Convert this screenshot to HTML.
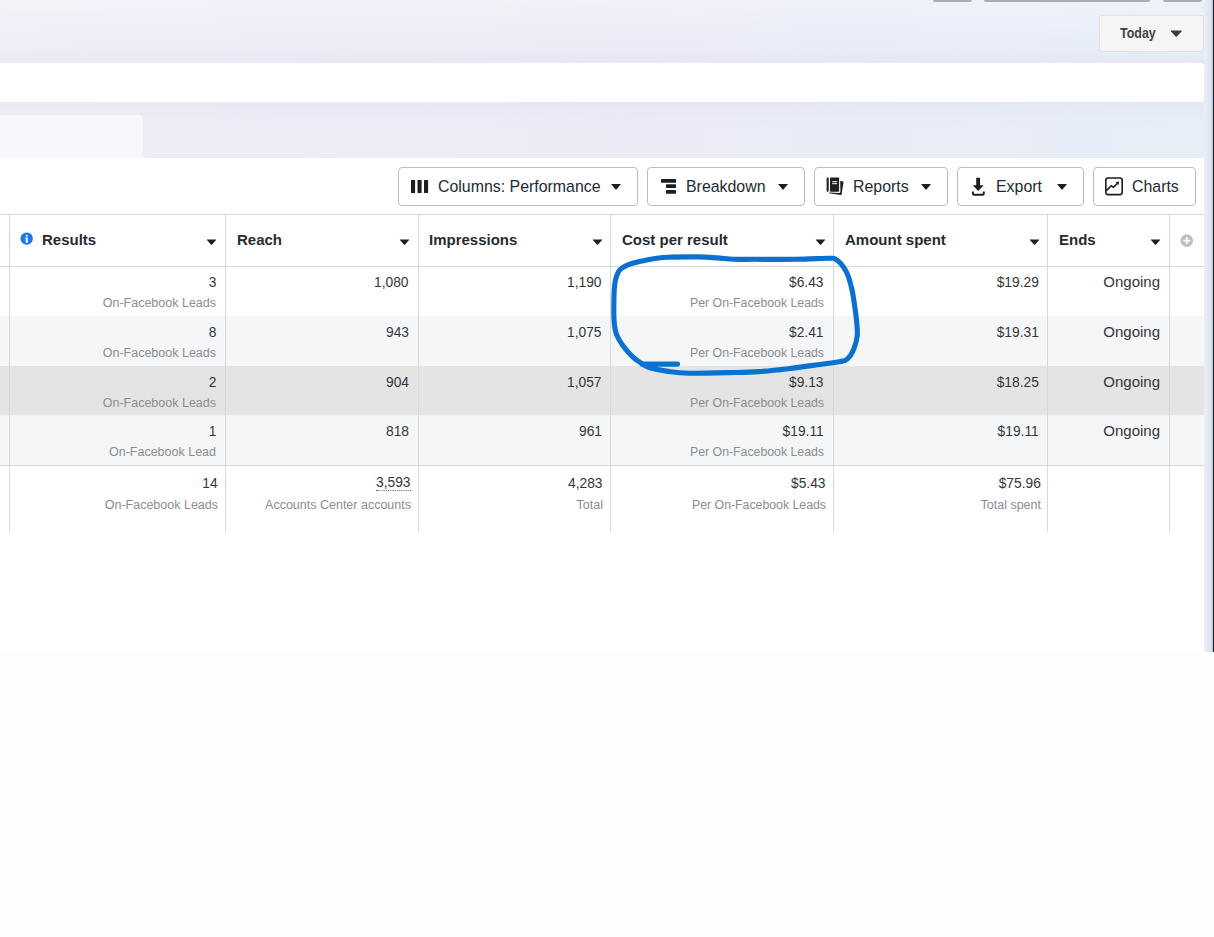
<!DOCTYPE html>
<html><head><meta charset="utf-8">
<style>
*{margin:0;padding:0;box-sizing:border-box}
html,body{width:1214px;height:937px;overflow:hidden;background:#fefefd;font-family:"Liberation Sans",sans-serif;position:relative}
.abs{position:absolute}
#bg{left:0;top:0;width:1214px;height:651px;background:linear-gradient(180deg,rgba(255,255,255,.3) 0px,rgba(255,255,255,0) 45px,rgba(120,100,130,.022) 62px,rgba(120,100,130,.03) 104px,rgba(255,255,255,0) 125px),linear-gradient(90deg,#efedf7 0%,#ebebf6 50%,#e6eef8 100%)}
#strip{left:1204px;top:0;width:9px;height:652px;background:linear-gradient(90deg,#e9eff7 0%,#e2e9f2 50%,#d2dce6 88%,#aab4be 100%)}
#dline{left:1213px;top:0;width:1px;height:652px;background:#1c2530}
#topb1{left:933px;top:0;width:39px;height:1.5px;background:#a9aeb4;border-radius:0 0 2px 2px}
#topb2{left:984px;top:0;width:166px;height:1.5px;background:#a9aeb4;border-radius:0 0 2px 2px}
#topb3{left:1163px;top:0;width:39px;height:1.5px;background:#a9aeb4;border-radius:0 0 2px 2px}
#today{left:1099px;top:15px;width:105px;height:37px;background:#f5f5f6;border:1px solid #dfe1e5;border-radius:3px}
#today span{position:absolute;left:20px;top:9px;font-size:14px;font-weight:bold;color:#3f4247;transform:scaleX(0.89);transform-origin:0 50%}
.tri{position:absolute;width:0;height:0;border-left:5.5px solid transparent;border-right:5.5px solid transparent;border-top:6.5px solid #1c1e21}
#wbar{left:0;top:63px;width:1204px;height:39px;background:#fff;border-radius:0 3.5px 3.5px 0}
#tab{left:0;top:115px;width:143px;height:44px;background:#f8f7fc;border-radius:0 5px 0 0}
#panel{left:0;top:158px;width:1204px;height:493px;background:#fff}
.btn{position:absolute;top:167px;height:39px;border:1px solid #b9bdc2;border-radius:4px;background:#fff}
.btn .t{position:absolute;top:10px;font-size:15.9px;color:#1c2b33}
.hline{position:absolute;left:0;width:1204px;height:1px;background:#d5d6d8}
.vline{position:absolute;top:215px;width:1px;height:317px;background:#d7d8da}
.row{position:absolute;left:0;width:1204px;height:50px}
.h{position:absolute;top:231px;font-size:15px;font-weight:bold;color:#272b30}
.n{position:absolute;font-size:15px;color:#33363b;text-align:right;transform:scaleX(0.92);transform-origin:100% 50%;white-space:nowrap}
.og{transform:none!important}
.dot{border-bottom:1px dotted #5a5f66;line-height:16px}
.sp{font-size:12.3px!important}
.s{position:absolute;font-size:12.5px;color:#8a8d91;text-align:right}
</style></head><body>
<div class="abs" id="bg"></div>
<div class="abs" id="strip"></div>
<div class="abs" id="dline"></div>
<div class="abs" id="topb1"></div>
<div class="abs" id="topb2"></div>
<div class="abs" id="topb3"></div>
<div class="abs" id="today"><span>Today</span><svg style="position:absolute;left:70px;top:14px" width="13" height="8" viewBox="0 0 13 8"><path d="M1.3 0.6 L11.2 0.6 Q12.1 0.6 11.5 1.4 L6.9 6.6 Q6.25 7.3 5.6 6.6 L1 1.4 Q0.4 0.6 1.3 0.6Z" fill="#3a3b3e"/></svg></div>
<div class="abs" id="wbar"></div>
<div class="abs" id="tab"></div>
<div class="abs" id="panel"></div>

<!-- toolbar buttons -->
<div class="btn" style="left:398px;width:240px"><span class="t" style="left:39px">Columns: Performance</span><div class="tri" style="left:212px;top:16px"></div></div>
<div class="btn" style="left:647px;width:158px"><span class="t" style="left:38px">Breakdown</span><div class="tri" style="left:130px;top:16px"></div></div>
<div class="btn" style="left:814px;width:134px"><span class="t" style="left:38px">Reports</span><div class="tri" style="left:106px;top:16px"></div></div>
<div class="btn" style="left:957px;width:127px"><span class="t" style="left:38px">Export</span><div class="tri" style="left:99px;top:16px"></div></div>
<div class="btn" style="left:1093px;width:103px"><span class="t" style="left:38px">Charts</span></div>

<!-- rows -->
<div class="row" style="top:316px;background:#f5f6f7"></div>
<div class="row" style="top:366px;height:49px;background:#e4e4e4"></div>
<div class="row" style="top:415px;background:#f5f6f7"></div>

<div class="hline" style="top:214px"></div>
<div class="hline" style="top:266px"></div>
<div class="hline" style="top:465px"></div>

<div class="vline" style="left:9px"></div>
<div class="vline" style="left:225px"></div>
<div class="vline" style="left:418px"></div>
<div class="vline" style="left:610px"></div>
<div class="vline" style="left:833px"></div>
<div class="vline" style="left:1047px"></div>
<div class="vline" style="left:1169px"></div>

<!-- headers -->
<div class="h" style="left:42px">Results</div>
<div class="h" style="left:237px">Reach</div>
<div class="h" style="left:429px">Impressions</div>
<div class="h" style="left:622px">Cost per result</div>
<div class="h" style="left:845px">Amount spent</div>
<div class="h" style="left:1059px">Ends</div>

<!-- cells -->
<div class="n" style="right:998px;top:273px">3</div>
<div class="s" style="right:998px;top:296px">On-Facebook Leads</div>
<div class="n" style="right:805px;top:273px">1,080</div>
<div class="n" style="right:612px;top:273px">1,190</div>
<div class="n" style="right:390px;top:273px">$6.43</div>
<div class="s sp" style="right:390px;top:296px">Per On-Facebook Leads</div>
<div class="n" style="right:175px;top:273px">$19.29</div>
<div class="n og" style="right:54px;top:273px">Ongoing</div>
<div class="n" style="right:998px;top:323px">8</div>
<div class="s" style="right:998px;top:346px">On-Facebook Leads</div>
<div class="n" style="right:805px;top:323px">943</div>
<div class="n" style="right:612px;top:323px">1,075</div>
<div class="n" style="right:390px;top:323px">$2.41</div>
<div class="s sp" style="right:390px;top:346px">Per On-Facebook Leads</div>
<div class="n" style="right:175px;top:323px">$19.31</div>
<div class="n og" style="right:54px;top:323px">Ongoing</div>
<div class="n" style="right:998px;top:373px">2</div>
<div class="s" style="right:998px;top:396px">On-Facebook Leads</div>
<div class="n" style="right:805px;top:373px">904</div>
<div class="n" style="right:612px;top:373px">1,057</div>
<div class="n" style="right:390px;top:373px">$9.13</div>
<div class="s sp" style="right:390px;top:396px">Per On-Facebook Leads</div>
<div class="n" style="right:175px;top:373px">$18.25</div>
<div class="n og" style="right:54px;top:373px">Ongoing</div>
<div class="n" style="right:998px;top:422px">1</div>
<div class="s" style="right:998px;top:445px">On-Facebook Lead</div>
<div class="n" style="right:805px;top:422px">818</div>
<div class="n" style="right:612px;top:422px">961</div>
<div class="n" style="right:390px;top:422px">$19.11</div>
<div class="s sp" style="right:390px;top:445px">Per On-Facebook Leads</div>
<div class="n" style="right:175px;top:422px">$19.11</div>
<div class="n og" style="right:54px;top:422px">Ongoing</div>
<div class="n" style="right:996px;top:474px">14</div>
<div class="s" style="right:996px;top:498px">On-Facebook Leads</div>
<div class="n dot" style="right:803px;top:474px">3,593</div>
<div class="s" style="right:803px;top:498px">Accounts Center accounts</div>
<div class="n" style="right:611px;top:474px">4,283</div>
<div class="s" style="right:611px;top:498px">Total</div>
<div class="n" style="right:388px;top:474px">$5.43</div>
<div class="s sp" style="right:388px;top:498px">Per On-Facebook Leads</div>
<div class="n" style="right:173px;top:474px">$75.96</div>
<div class="s" style="right:173px;top:498px">Total spent</div>

<!-- header icons -->
<svg class="abs" style="left:20px;top:232px" width="14" height="14" viewBox="0 0 14 14"><circle cx="6.7" cy="6.6" r="6.2" fill="#1877f2"/><rect x="5.8" y="5.6" width="2" height="5.2" fill="#fff"/><circle cx="6.8" cy="3.7" r="1.05" fill="#fff"/><rect x="5.2" y="5.6" width="1.2" height="1.1" fill="#fff"/></svg>
<svg class="abs" style="left:205px;top:237px" width="14" height="9" viewBox="0 0 14 9"><path d="M2.2 2.4 L10.8 2.4 Q11.6 2.4 11.1 3.1 L7.1 7.4 Q6.5 8 5.9 7.4 L1.9 3.1 Q1.4 2.4 2.2 2.4Z" fill="#1c1e21"/></svg>
<svg class="abs" style="left:398px;top:237px" width="14" height="9" viewBox="0 0 14 9"><path d="M2.2 2.4 L10.8 2.4 Q11.6 2.4 11.1 3.1 L7.1 7.4 Q6.5 8 5.9 7.4 L1.9 3.1 Q1.4 2.4 2.2 2.4Z" fill="#1c1e21"/></svg>
<svg class="abs" style="left:591px;top:237px" width="14" height="9" viewBox="0 0 14 9"><path d="M2.2 2.4 L10.8 2.4 Q11.6 2.4 11.1 3.1 L7.1 7.4 Q6.5 8 5.9 7.4 L1.9 3.1 Q1.4 2.4 2.2 2.4Z" fill="#1c1e21"/></svg>
<svg class="abs" style="left:814px;top:237px" width="14" height="9" viewBox="0 0 14 9"><path d="M2.2 2.4 L10.8 2.4 Q11.6 2.4 11.1 3.1 L7.1 7.4 Q6.5 8 5.9 7.4 L1.9 3.1 Q1.4 2.4 2.2 2.4Z" fill="#1c1e21"/></svg>
<svg class="abs" style="left:1028px;top:237px" width="14" height="9" viewBox="0 0 14 9"><path d="M2.2 2.4 L10.8 2.4 Q11.6 2.4 11.1 3.1 L7.1 7.4 Q6.5 8 5.9 7.4 L1.9 3.1 Q1.4 2.4 2.2 2.4Z" fill="#1c1e21"/></svg>
<svg class="abs" style="left:1149px;top:237px" width="14" height="9" viewBox="0 0 14 9"><path d="M2.2 2.4 L10.8 2.4 Q11.6 2.4 11.1 3.1 L7.1 7.4 Q6.5 8 5.9 7.4 L1.9 3.1 Q1.4 2.4 2.2 2.4Z" fill="#1c1e21"/></svg>
<svg class="abs" style="left:1180px;top:234px" width="14" height="14" viewBox="0 0 14 14"><circle cx="6.8" cy="6.6" r="6.3" fill="#bcc0c4"/><rect x="3.3" y="5.8" width="7" height="1.7" fill="#fff"/><rect x="5.95" y="3.1" width="1.7" height="7" fill="#fff"/></svg>
<!-- toolbar icons -->
<svg class="abs" style="left:410px;top:179px" width="20" height="15" viewBox="0 0 20 15"><rect x="1" y="1" width="4.1" height="13" rx="0.5" fill="#1c1e21"/><rect x="7.5" y="1" width="4.1" height="13" rx="0.5" fill="#1c1e21"/><rect x="14" y="1" width="4.1" height="13" rx="0.5" fill="#1c1e21"/></svg>
<svg class="abs" style="left:660px;top:178px" width="18" height="17" viewBox="0 0 18 17"><rect x="1" y="1" width="15" height="3.8" rx="0.4" fill="#1c1e21"/><rect x="6" y="6.3" width="10" height="3.6" rx="0.4" fill="#1c1e21"/><rect x="6" y="12" width="10" height="3.7" rx="0.4" fill="#1c1e21"/></svg>
<svg class="abs" style="left:825px;top:176px" width="20" height="20" viewBox="0 0 20 20"><rect x="1.6" y="1.6" width="2.1" height="14.2" rx="1" fill="#1c1e21"/><path d="M15.2 4.9 L18.6 5.6 L16.6 18.6 Q16.4 19 15.9 19 L4 17.3 L4.2 16.6 L14 17 Q15.3 17 15.4 15.8Z" fill="#1c1e21"/><rect x="5" y="1.4" width="9.1" height="14.4" rx="0.8" fill="#1c1e21"/><rect x="7.2" y="5.2" width="4.9" height="1" fill="#fff"/><rect x="7.2" y="7.2" width="4.9" height="1" fill="#fff"/></svg>
<svg class="abs" style="left:970px;top:176px" width="16" height="20" viewBox="0 0 16 20"><path d="M6.2 1.8 L10.1 1.8 L10.1 9.2 L13.7 9.2 L8.1 15.1 L2.9 9.2 L6.2 9.2Z" fill="#1c1e21"/><path d="M2.9 15.6 L2.9 17.4 Q2.9 18.7 4.2 18.7 L12.5 18.7 Q13.8 18.7 13.8 17.4 L13.8 15.6" fill="none" stroke="#1c1e21" stroke-width="2"/></svg>
<svg class="abs" style="left:1104px;top:176px" width="20" height="20" viewBox="0 0 20 20"><rect x="1.8" y="2" width="16.4" height="16.6" rx="2.3" fill="none" stroke="#1c1e21" stroke-width="1.6"/><path d="M2.4 14.6 L7.2 9.7 L9.4 11.4 L13.8 7" fill="none" stroke="#1c1e21" stroke-width="1.6" stroke-linejoin="round"/><path d="M11.6 6.2 L15.2 5.4 L14.4 9Z" fill="#1c1e21"/></svg>
<!-- annotation -->
<svg class="abs" style="left:0;top:0" width="1214" height="937" viewBox="0 0 1214 937"><path d="M619.6 270.2 C621.0 268.5 622.9 267.4 625.0 266.2 C627.1 265.0 628.8 264.2 632.5 263.2 C636.2 262.1 641.1 260.9 647.0 259.9 C652.9 258.9 659.1 257.8 667.7 257.3 C676.3 256.8 690.3 256.8 698.5 256.9 C706.7 257.0 711.2 257.5 717.1 257.9 C723.0 258.3 727.4 259.1 733.6 259.3 C739.8 259.5 743.9 259.3 754.2 259.3 C764.5 259.3 782.9 259.5 795.3 259.3 C807.6 259.1 821.8 258.4 828.3 258.3 C834.8 258.2 832.5 257.9 834.5 258.7 C836.5 259.5 838.6 261.1 840.6 263.4 C842.6 265.7 844.9 268.5 846.8 272.7 C848.7 276.9 850.5 283.3 851.8 288.8 C853.1 294.3 853.8 299.9 854.6 305.5 C855.4 311.1 856.3 317.0 856.7 322.1 C857.1 327.2 857.8 331.4 857.2 336.0 C856.7 340.6 855.0 346.1 853.4 349.9 C851.8 353.7 849.8 356.8 847.5 358.8 C845.2 360.8 844.6 360.7 839.6 361.7 C834.6 362.7 826.4 363.5 817.8 364.7 C809.2 365.9 798.1 367.5 788.2 368.7 C778.3 369.9 768.4 371.0 758.5 371.6 C748.6 372.2 740.4 372.3 728.9 372.6 C717.4 372.9 699.2 373.4 689.3 373.2 C679.4 373.0 676.1 372.5 669.5 371.6 C662.9 370.7 654.4 369.0 649.8 367.7 C645.2 366.4 644.8 365.5 641.9 363.7 C639.0 361.9 635.9 359.8 632.7 356.8 C629.6 353.8 625.8 349.6 623.0 345.7 C620.2 341.8 617.6 337.6 616.1 333.2 C614.6 328.8 614.4 325.5 614.0 319.3 C613.6 313.1 613.9 301.7 614.0 295.8 C614.1 289.9 614.4 287.2 614.8 284.0 C615.2 280.8 615.7 278.6 616.5 276.3 C617.3 274.0 618.2 271.9 619.6 270.2 Z M641.9 364.1 L677.5 364.1" fill="none" stroke="#0b71d0" stroke-width="5.1" stroke-linecap="round" stroke-linejoin="round"/></svg>

</body></html>
